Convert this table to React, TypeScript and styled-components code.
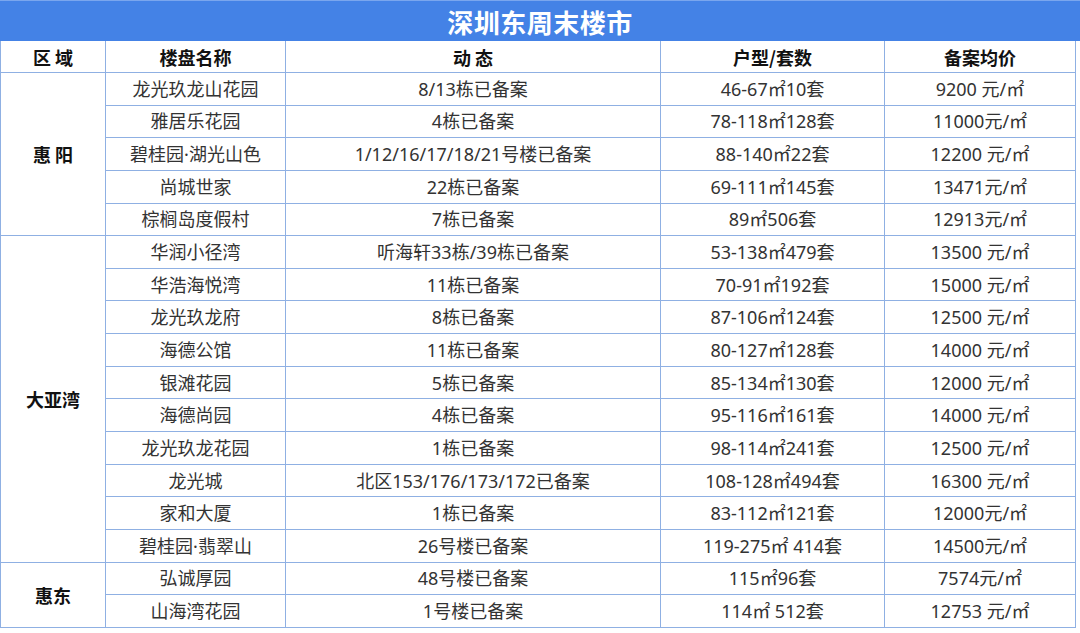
import styled, { createGlobalStyle } from 'styled-components'

/*
 * Data
 */

type Project = {
    name: string
    status: string
    units: string
    price: string
}

type Region = {
    region: string
    projects: Project[]
}

const regions: Region[] = [
    {
        region: '惠 阳',
        projects: [
            { name: '龙光玖龙山花园', status: '8/13栋已备案', units: '46-67㎡10套', price: '9200 元/㎡' },
            { name: '雅居乐花园', status: '4栋已备案', units: '78-118㎡128套', price: '11000元/㎡' },
            { name: '碧桂园·湖光山色', status: '1/12/16/17/18/21号楼已备案', units: '88-140㎡22套', price: '12200 元/㎡' },
            { name: '尚城世家', status: '22栋已备案', units: '69-111㎡145套', price: '13471元/㎡' },
            { name: '棕榈岛度假村', status: '7栋已备案', units: '89㎡506套', price: '12913元/㎡' },
        ],
    },
    {
        region: '大亚湾',
        projects: [
            { name: '华润小径湾', status: '听海轩33栋/39栋已备案', units: '53-138㎡479套', price: '13500 元/㎡' },
            { name: '华浩海悦湾', status: '11栋已备案', units: '70-91㎡192套', price: '15000 元/㎡' },
            { name: '龙光玖龙府', status: '8栋已备案', units: '87-106㎡124套', price: '12500 元/㎡' },
            { name: '海德公馆', status: '11栋已备案', units: '80-127㎡128套', price: '14000 元/㎡' },
            { name: '银滩花园', status: '5栋已备案', units: '85-134㎡130套', price: '12000 元/㎡' },
            { name: '海德尚园', status: '4栋已备案', units: '95-116㎡161套', price: '14000 元/㎡' },
            { name: '龙光玖龙花园', status: '1栋已备案', units: '98-114㎡241套', price: '12500 元/㎡' },
            { name: '龙光城', status: '北区153/176/173/172已备案', units: '108-128㎡494套', price: '16300 元/㎡' },
            { name: '家和大厦', status: '1栋已备案', units: '83-112㎡121套', price: '12000元/㎡' },
            { name: '碧桂园·翡翠山', status: '26号楼已备案', units: '119-275㎡ 414套', price: '14500元/㎡' },
        ],
    },
    {
        region: '惠东',
        projects: [
            { name: '弘诚厚园', status: '48号楼已备案', units: '115㎡96套', price: '7574元/㎡' },
            { name: '山海湾花园', status: '1号楼已备案', units: '114㎡ 512套', price: '12753 元/㎡' },
        ],
    },
]

const columns = [
    { label: '区 域', width: 105 },
    { label: '楼盘名称', width: 180 },
    { label: '动 态', width: 375 },
    { label: '户型/套数', width: 224 },
    { label: '备案均价', width: 191 },
]

/*
 * Styles
 */

const GlobalStyle = createGlobalStyle`
    html, body {
        margin: 0;
        padding: 0;
        background: #ffffff;
    }
    body {
        font-family: "Noto Sans", "Noto Sans CJK SC", sans-serif;
    }
`

const Page = styled.div`
    width: 1080px;
    height: 633px;
    background: #ffffff;
    overflow: hidden;
`

const TitleBar = styled.div`
    height: 41px;
    background: #4482e6;
    border-top: 1px solid #7aa6ee;
    box-sizing: border-box;
    display: flex;
    align-items: center;
    justify-content: center;
    color: #ffffff;
    font-family: "Noto Sans CJK SC", sans-serif;
    font-size: 26px;
    font-weight: 700;
    letter-spacing: 0.5px;
`

const Table = styled.table`
    width: 1075px;
    border-collapse: collapse;
    table-layout: fixed;
`

const Col = styled.col<{ $width: number }>`
    width: ${({ $width }) => $width}px;
`

const HeadCell = styled.th`
    height: 31px;
    padding: 0;
    border: 1px solid #8fb0e3;
    border-top: none;
    font-family: "Noto Sans CJK SC", sans-serif;
    font-size: 18px;
    font-weight: 700;
    color: #111111;
    text-align: center;
    line-height: 1;
    white-space: pre;
`

const Row = styled.tr`
    height: 32.65px;
`

const Cell = styled.td`
    padding: 0;
    border: 1px solid #8fb0e3;
    font-size: 18px;
    color: #333333;
    text-align: center;
    line-height: 1;
    white-space: nowrap;
`

const RegionCell = styled(Cell)`
    font-family: "Noto Sans CJK SC", sans-serif;
    font-weight: 700;
    color: #111111;
    white-space: pre;
`

/*
 * App
 */

export default function App() {
    return (
        <Page>
            <GlobalStyle />
            <TitleBar>深圳东周末楼市</TitleBar>
            <Table>
                <colgroup>
                    {columns.map((col) => (
                        <Col key={col.label} $width={col.width} />
                    ))}
                </colgroup>
                <thead>
                    <tr>
                        {columns.map((col) => (
                            <HeadCell key={col.label}>{col.label}</HeadCell>
                        ))}
                    </tr>
                </thead>
                <tbody>
                    {regions.map((group) =>
                        group.projects.map((item, index) => (
                            <Row key={item.name}>
                                {index === 0 && (
                                    <RegionCell rowSpan={group.projects.length}>
                                        {group.region}
                                    </RegionCell>
                                )}
                                <Cell>{item.name}</Cell>
                                <Cell>{item.status}</Cell>
                                <Cell>{item.units}</Cell>
                                <Cell>{item.price}</Cell>
                            </Row>
                        ))
                    )}
                </tbody>
            </Table>
        </Page>
    )
}
